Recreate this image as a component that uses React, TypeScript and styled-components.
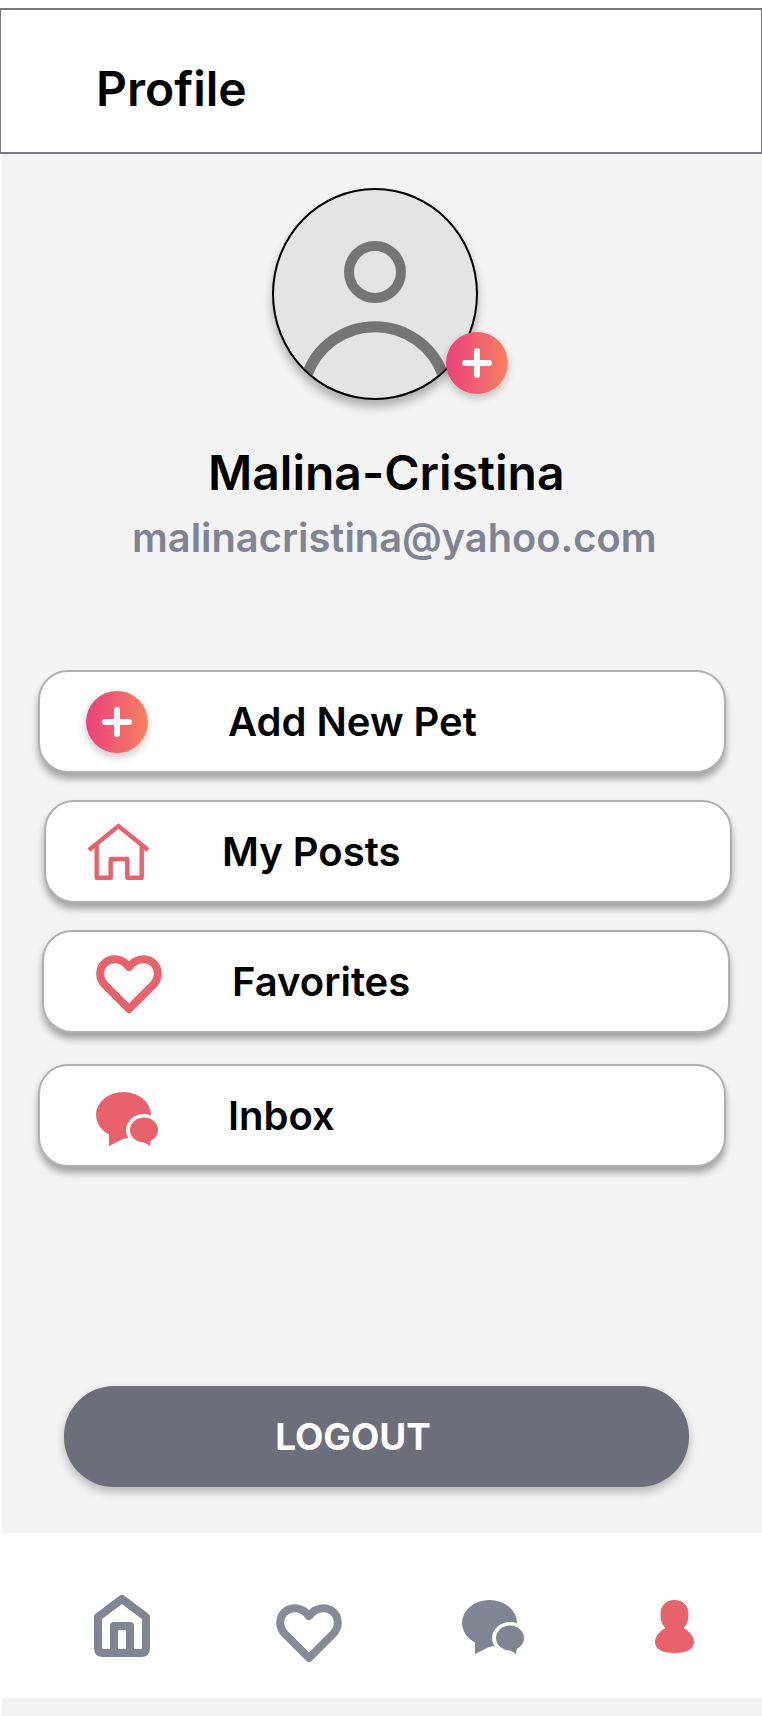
import React from "react";
import styled, { createGlobalStyle } from "styled-components";

const RED = "#e7626a";
const SLATE = "#7f8592";

const Global = createGlobalStyle`
    html, body {
        margin: 0;
        padding: 0;
        background: #fff;
    }
    body {
        font-family: Inter, "Liberation Sans", sans-serif;
    }
`;

const Page = styled.div`
    width: 762px;
    height: 1716px;
    padding-top: 8px;
    box-sizing: border-box;
    display: flex;
    flex-direction: column;
    overflow: hidden;
`;

const Header = styled.header`
    height: 146px;
    box-sizing: border-box;
    border: 2px solid #7a7880;
    border-right-width: 1px;
    border-left-width: 1px;
    padding: 15px 0 0 95px;
    display: flex;
    align-items: center;
`;

const Title = styled.h1`
    margin: 0;
    font-size: 48px;
    font-weight: 600;
    color: #000;
    line-height: 56px;
`;

const Main = styled.main`
    margin-left: 2px;
    height: 1379px;
    background: #f3f3f3;
    display: flex;
    flex-direction: column;
    align-items: flex-start;
    padding-top: 34px;
    box-sizing: border-box;
`;

const AvatarWrap = styled.div`
    position: relative;
    margin-left: 270px;
    width: 206px;
    height: 212px;
`;

const AvatarCircle = styled.div`
    width: 100%;
    height: 100%;
    box-sizing: border-box;
    border: 2px solid #000;
    border-radius: 50%;
    background: #e4e4e4;
    box-shadow: 0 7px 10px rgba(0, 0, 0, 0.28);
    overflow: hidden;
    svg {
        display: block;
        margin: -2px;
    }
`;

const AvatarBadge = styled.div`
    position: absolute;
    left: 174px;
    top: 144px;
`;

const PlusCircle = styled.div`
    width: 62px;
    height: 62px;
    border-radius: 50%;
    background: linear-gradient(90deg, #ec407f, #f48160);
    box-shadow: 0 4px 8px rgba(0, 0, 0, 0.22);
    display: flex;
    align-items: center;
    justify-content: center;
`;

const Name = styled.div`
    margin: 45px 0 0 206px;
    font-size: 48px;
    font-weight: 600;
    line-height: 56px;
    color: #000;
`;

const Email = styled.div`
    margin: 13px 0 0 130px;
    font-size: 39.8px;
    font-weight: 600;
    line-height: 48px;
    color: #808394;
`;

const Menu = styled.div`
    margin-top: 108px;
    width: 100%;
    display: flex;
    flex-direction: column;
    align-items: flex-start;
`;

const Row = styled.div<{ $left: number; $top: number; $labelAt: number }>`
    margin-left: ${(p) => p.$left}px;
    margin-top: ${(p) => p.$top}px;
    width: 688px;
    height: 103px;
    box-sizing: border-box;
    background: #fff;
    border: 2px solid #b0b0b0;
    border-radius: 30px;
    box-shadow: 0 6px 7px rgba(0, 0, 0, 0.33);
    display: grid;
    grid-template-columns: ${(p) => p.$labelAt}px 1fr;
    align-items: center;
`;

const RowIcon = styled.div<{ $left: number; $down?: number }>`
    margin-left: ${(p) => p.$left}px;
    margin-top: ${(p) => p.$down ?? 0}px;
    display: flex;
    svg {
        display: block;
    }
`;

const RowLabel = styled.span`
    font-size: 40px;
    font-weight: 600;
    color: #000;
    line-height: 48px;
`;

const Logout = styled.button`
    margin: 219px 0 0 62px;
    width: 625px;
    height: 101px;
    border: none;
    border-radius: 50px;
    background: #6c6e7a;
    box-shadow: 0 5px 10px rgba(0, 0, 0, 0.25);
    color: #fff;
    font-family: inherit;
    font-size: 36.8px;
    font-weight: 700;
    padding: 0 47px 0 0;
`;

const Nav = styled.nav`
    height: 165px;
    background: #fff;
    display: grid;
    grid-template-columns: 276px 186px 193px 107px;
`;

const NavCell = styled.div<{ $left: number; $top: number }>`
    padding-left: ${(p) => p.$left}px;
    padding-top: ${(p) => p.$top}px;
    svg {
        display: block;
    }
`;

const Footer = styled.div`
    margin-left: 2px;
    flex: 1;
    background: #f3f3f3;
`;

const PlusIcon = () => (
    <svg width="30" height="30" viewBox="0 0 30 30">
        <path d="M3 15H27M15 3V27" stroke="#fff" strokeWidth="6" strokeLinecap="round" fill="none" />
    </svg>
);

const AvatarIcon = () => (
    <svg width="206" height="212" viewBox="0 0 206 212">
        <circle cx="103" cy="84" r="26" stroke="#757575" strokeWidth="10" fill="none" />
        <path d="M35 187A72 72 0 0 1 171 187" stroke="#757575" strokeWidth="11" fill="none" />
    </svg>
);

const OutlineHome = () => (
    <svg width="66" height="59" viewBox="0 0 66 59">
        <path d="M3 28L32.5 4L62 28" stroke={RED} strokeWidth="4.4" fill="none" />
        <path
            d="M10.7 23V55.7H24.7V37H41.3V55.7H55.7V23"
            stroke={RED}
            strokeWidth="4.4"
            strokeLinejoin="round"
            fill="none"
        />
    </svg>
);

const HeartIcon = ({ color }: { color: string }) => (
    <svg width="66" height="59" viewBox="0 0 66 59">
        <path
            d="M33 54L9 30C2 23 3 12 10 7C17 2 27 4 33 12C39 4 49 2 56 7C63 12 64 23 57 30Z"
            stroke={color}
            strokeWidth="8"
            strokeLinejoin="round"
            fill="none"
        />
    </svg>
);

const ChatIcon = ({ color }: { color: string }) => (
    <svg width="62" height="54" viewBox="0 0 62 54">
        <ellipse cx="27.5" cy="23" rx="27.5" ry="23" fill={color} />
        <polygon points="13,40 13,54 27,47 37,45" fill={color} />
        <ellipse cx="48" cy="38" rx="18" ry="16" fill="#fff" />
        <ellipse cx="48" cy="38" rx="14" ry="12.5" fill={color} />
        <polygon points="46,49 54,54 55,47" fill={color} />
    </svg>
);

const NavHome = () => (
    <svg width="56" height="62" viewBox="0 0 56 62">
        <path
            d="M4 22L28 4L52 22V53Q52 58 47 58H9Q4 58 4 53Z"
            stroke={SLATE}
            strokeWidth="8"
            strokeLinejoin="round"
            fill="none"
        />
        <path d="M20 58V31H36V58" stroke={SLATE} strokeWidth="8" strokeLinejoin="round" fill="none" />
    </svg>
);

const PersonIcon = () => (
    <svg width="39" height="53" viewBox="0 0 39 53">
        <path
            d="M19.5 0C28 0 33.5 6 33.5 14C33.5 20 32 25 28.5 28C34 31 39 36 39 42C39 50 30 53 19.5 53C9 53 0 50 0 42C0 36 5 31 10.5 28C7 25 5.5 20 5.5 14C5.5 6 11 0 19.5 0Z"
            fill={RED}
        />
    </svg>
);

export default function App() {
    return (
        <>
            <Global />
            <Page>
                <Header>
                    <Title>Profile</Title>
                </Header>
                <Main>
                    <AvatarWrap>
                        <AvatarCircle>
                            <AvatarIcon />
                        </AvatarCircle>
                        <AvatarBadge>
                            <PlusCircle>
                                <PlusIcon />
                            </PlusCircle>
                        </AvatarBadge>
                    </AvatarWrap>
                    <Name>Malina-Cristina</Name>
                    <Email>malinacristina@yahoo.com</Email>
                    <Menu>
                        <Row $left={36} $top={0} $labelAt={188}>
                            <RowIcon $left={46}>
                                <PlusCircle>
                                    <PlusIcon />
                                </PlusCircle>
                            </RowIcon>
                            <RowLabel>Add New Pet</RowLabel>
                        </Row>
                        <Row $left={42} $top={27} $labelAt={176}>
                            <RowIcon $left={40}>
                                <OutlineHome />
                            </RowIcon>
                            <RowLabel>My Posts</RowLabel>
                        </Row>
                        <Row $left={40} $top={27} $labelAt={188}>
                            <RowIcon $left={52} $down={6}>
                                <HeartIcon color={RED} />
                            </RowIcon>
                            <RowLabel>Favorites</RowLabel>
                        </Row>
                        <Row $left={36} $top={31} $labelAt={188}>
                            <RowIcon $left={56} $down={6}>
                                <ChatIcon color={RED} />
                            </RowIcon>
                            <RowLabel>Inbox</RowLabel>
                        </Row>
                    </Menu>
                    <Logout>LOGOUT</Logout>
                </Main>
                <Nav>
                    <NavCell $left={94} $top={62}>
                        <NavHome />
                    </NavCell>
                    <NavCell $left={0} $top={71}>
                        <HeartIcon color="#868b97" />
                    </NavCell>
                    <NavCell $left={0} $top={67}>
                        <ChatIcon color={SLATE} />
                    </NavCell>
                    <NavCell $left={0} $top={67}>
                        <PersonIcon />
                    </NavCell>
                </Nav>
                <Footer />
            </Page>
        </>
    );
}
